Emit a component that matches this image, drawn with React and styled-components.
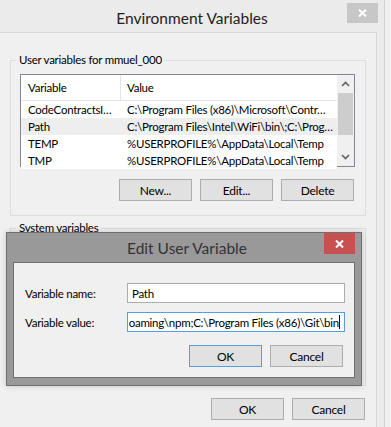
import React from 'react'
import styled, { createGlobalStyle } from 'styled-components';

const GlobalStyle = createGlobalStyle`
    html, body {
        margin: 0;
        padding: 0;
        background: #f0f0f0;
    }
    body {
        font-family: Lato, "Noto Sans", sans-serif;
        font-size: 11.5px;
        letter-spacing: -0.25px;
        color: #000;
    }
`;

const userVars = [
    { name: 'CodeContractsI…', value: 'C:\\Program Files (x86)\\Microsoft\\Contr…' },
    { name: 'Path', value: 'C:\\Program Files\\Intel\\WiFi\\bin\\;C:\\Prog…', selected: true },
    { name: 'TEMP', value: '%USERPROFILE%\\AppData\\Local\\Temp' },
    { name: 'TMP', value: '%USERPROFILE%\\AppData\\Local\\Temp' },
];

function CloseGlyph() {
    return (
        <svg width="9" height="8" viewBox="0 0 9 8">
            <path d="M1 0.5 L8 7.5 M8 0.5 L1 7.5" stroke="#fff" strokeWidth="2" fill="none" />
        </svg>
    )
}

function Chevron({ down }) {
    return (
        <svg width="9" height="6" viewBox="0 0 9 6">
            <polyline
                points={down ? '1,1 4.5,4.5 8,1' : '1,5 4.5,1.5 8,5'}
                stroke="#606060" strokeWidth="1.6" fill="none"
            />
        </svg>
    )
}

function App() {
    return (
        <Screen>
            <GlobalStyle />
            <EnvWindow>
                <TitleBar>
                    <span />
                    <Title>Environment Variables</Title>
                    <CloseButton $tone="#c7c7c7" $top={3}><CloseGlyph /></CloseButton>
                </TitleBar>
                <Client>
                    <Group>
                        <legend>User variables for mmuel_000</legend>
                        <ListBox>
                            <ListMain>
                                <HeaderRow>
                                    <NameCell>Variable</NameCell>
                                    <ValueCell $divider>Value</ValueCell>
                                </HeaderRow>
                                {userVars.map((v) => (
                                    <Row key={v.name} $selected={v.selected}>
                                        <NameCell>{v.name}</NameCell>
                                        <ValueCell>{v.value}</ValueCell>
                                    </Row>
                                ))}
                            </ListMain>
                            <ScrollBar>
                                <Arrow><Chevron /></Arrow>
                                <Thumb />
                                <Track />
                                <Arrow><Chevron down /></Arrow>
                            </ScrollBar>
                        </ListBox>
                        <ButtonRow $pad={1}>
                            <Button>New...</Button>
                            <Button>Edit...</Button>
                            <Button>Delete</Button>
                        </ButtonRow>
                    </Group>
                    <Group $tall>
                        <legend>System variables</legend>
                    </Group>
                    <ButtonRow $pad={1} $top={12}>
                        <Button>OK</Button>
                        <Button>Cancel</Button>
                    </ButtonRow>
                </Client>
            </EnvWindow>

            <Dialog>
                <DialogTitle>
                    <span />
                    <Title $dark>Edit User Variable</Title>
                    <CloseButton $tone="#c75050" $top={0}><CloseGlyph /></CloseButton>
                </DialogTitle>
                <DialogBody>
                    <Fields>
                        <FieldLabel>Variable name:</FieldLabel>
                        <TextBox>Path</TextBox>
                        <FieldLabel>Variable value:</FieldLabel>
                        <TextBox $focused>
                            {'oaming\\npm;C:\\Program Files (x86)\\Git\\bin'}
                            <Caret />
                        </TextBox>
                    </Fields>
                    <ButtonRow $pad={2} $top={13}>
                        <Button $focused>OK</Button>
                        <Button>Cancel</Button>
                    </ButtonRow>
                </DialogBody>
            </Dialog>
        </Screen>
    )
}

const Screen = styled.div`
    position: relative;
    width: 391px;
    height: 427px;
    overflow: hidden;
    background: #f0f0f0;
`;

const EnvWindow = styled.div`
    width: 384px;
    height: 427px;
    background: #ebebeb;
    border-right: 1px solid #d2d2d2;
    display: flex;
    flex-direction: column;
`;

const TitleBar = styled.div`
    height: 32px;
    display: grid;
    grid-template-columns: 1fr auto 1fr;
    align-items: center;
`;

const Title = styled.div`
    font-size: 15.5px;
    letter-spacing: 0;
    color: ${p => p.$dark ? '#333' : '#222'};
    margin-top: ${p => p.$dark ? '1px' : '3px'};
`;

const CloseButton = styled.div`
    justify-self: end;
    align-self: start;
    margin-top: ${p => p.$top}px;
    margin-right: 6px;
    width: 31px;
    height: 20px;
    background: ${p => p.$tone};
    display: flex;
    align-items: center;
    justify-content: center;
`;

const Client = styled.div`
    flex: 1;
    width: 377px;
    box-sizing: border-box;
    background: #f0f0f0;
    border-top: 1px solid #d9d9d9;
    border-right: 1px solid #d9d9d9;
    padding: 0 10px 0 10px;
    display: flex;
    flex-direction: column;
`;

const Group = styled.fieldset`
    margin: ${p => p.$tall ? '4px' : '19px'} 0 0 0;
    padding: 6px 10px 14px 9px;
    border: 1px solid #dcdcdc;
    min-width: 0;
    box-sizing: border-box;
    height: ${p => p.$tall ? '166px' : 'auto'};

    legend {
        margin-left: -4px;
        padding: 0 3px;
        line-height: 16px;
    }
`;

const ListBox = styled.div`
    height: 93px;
    box-sizing: border-box;
    border: 1px solid #828790;
    background: #fff;
    display: flex;
`;

const ListMain = styled.div`
    flex: 1;
    min-width: 0;
`;

const HeaderRow = styled.div`
    height: 25px;
    display: flex;
    align-items: center;
    border-bottom: 1px solid #e5e5e5;
`;

const Row = styled.div`
    height: 17px;
    display: flex;
    align-items: center;
    background: ${p => p.$selected ? '#eeeeee' : '#fff'};
`;

const NameCell = styled.div`
    width: 99px;
    box-sizing: border-box;
    padding-left: 7px;
    white-space: nowrap;
    overflow: hidden;
`;

const ValueCell = styled.div`
    flex: 1;
    align-self: stretch;
    display: flex;
    align-items: center;
    padding-left: 6px;
    white-space: nowrap;
    overflow: hidden;
    border-left: 1px solid ${p => p.$divider ? '#e5e5e5' : 'transparent'};
`;

const ScrollBar = styled.div`
    width: 17px;
    background: #f0f0f0;
    display: flex;
    flex-direction: column;
`;

const Arrow = styled.div`
    height: 18px;
    display: flex;
    align-items: center;
    justify-content: center;
`;

const Thumb = styled.div`
    height: 42px;
    margin: 0 1px;
    background: #cdcdcd;
`;

const Track = styled.div`
    flex: 1;
`;

const ButtonRow = styled.div`
    display: flex;
    justify-content: flex-end;
    gap: 8px;
    margin-top: ${p => p.$top ?? 12}px;
    padding-right: ${p => p.$pad}px;
`;

const Button = styled.div`
    width: 73px;
    height: 22px;
    box-sizing: border-box;
    border: 1px solid ${p => p.$focused ? '#569de5' : '#adadad'};
    background: #e1e1e1;
    display: flex;
    align-items: center;
    justify-content: center;
    font-size: 12px;
`;

const Dialog = styled.div`
    position: absolute;
    left: 6px;
    top: 232px;
    width: 356px;
    height: 154px;
    box-sizing: border-box;
    background: #999999;
    border: 1px solid #6f6f6f;
    box-shadow: 0 0 6px rgba(0, 0, 0, 0.18);
    padding: 0 6px 7px 6px;
    display: flex;
    flex-direction: column;
`;

const DialogTitle = styled.div`
    height: 29px;
    display: grid;
    grid-template-columns: 1fr auto 1fr;
    align-items: center;
    margin-right: -6px;

    ${CloseButton} {
        height: 21px;
    }
`;

const DialogBody = styled.div`
    flex: 1;
    background: #f0f0f0;
    border: 1px solid #6f6f6f;
    padding: 20px 9px 10px 11px;
`;

const Fields = styled.div`
    display: grid;
    grid-template-columns: 102px 218px;
    row-gap: 9px;
    align-items: center;
`;

const FieldLabel = styled.div`
    white-space: nowrap;
`;

const TextBox = styled.div`
    height: 20px;
    box-sizing: border-box;
    border: 1px solid ${p => p.$focused ? '#569de5' : '#abadb3'};
    background: #fff;
    padding: 0 4px;
    display: flex;
    align-items: center;
    justify-content: ${p => p.$focused ? 'flex-end' : 'flex-start'};
    white-space: nowrap;
    overflow: hidden;
`;

const Caret = styled.span`
    flex: none;
    width: 1px;
    height: 14px;
    background: #000;
`;

export default App;
